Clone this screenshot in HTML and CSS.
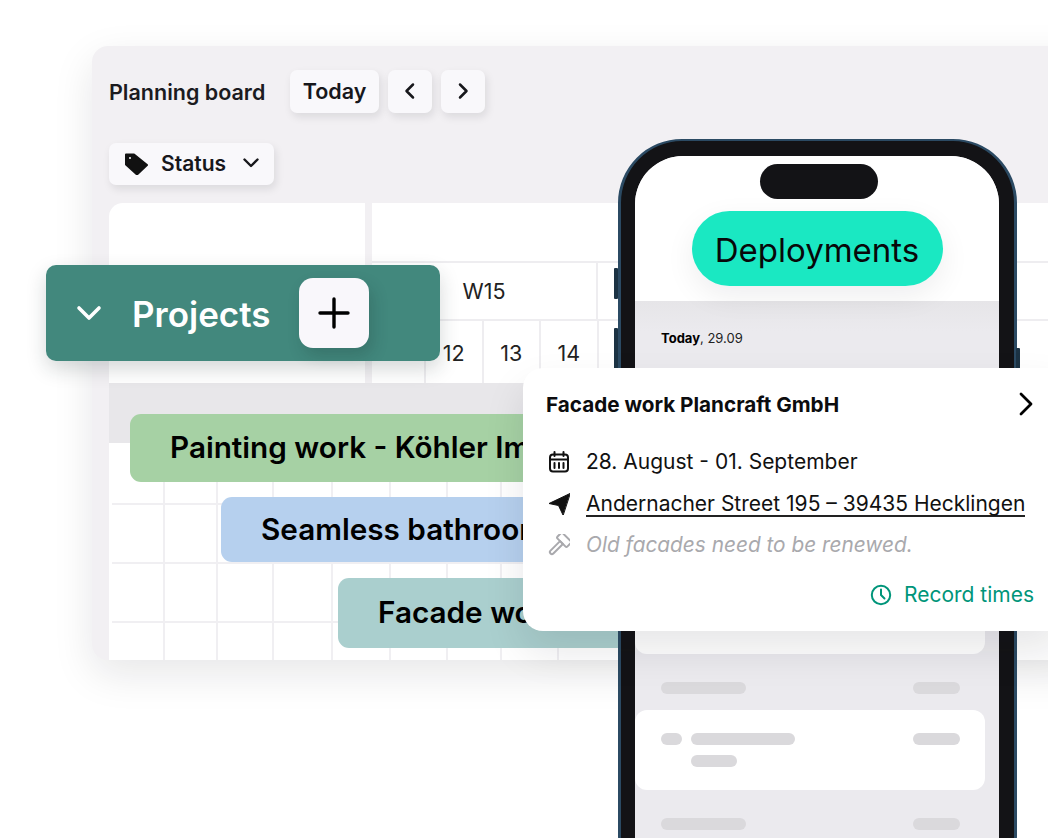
FILE: index.html
```html
<!DOCTYPE html>
<html lang="en">
<head>
    <meta charset="UTF-8">
    <meta name="viewport" content="width=device-width, initial-scale=1.0">
    <title>Planning board</title>
    <link rel="stylesheet" href="styles.css">
</head>
<body>
    <div class="stage">
        <!-- Planning board window -->
        <section class="board">
            <div class="board-top">
                <h2>Planning board</h2>
                <button class="btn btn-today">Today</button>
                <button class="btn btn-arrow">
                    <svg width="16" height="20" viewBox="0 0 16 20"><path d="M11 3.500 4.500 10l6.500 6.500" /></svg>
                </button>
                <button class="btn btn-arrow">
                    <svg width="16" height="20" viewBox="0 0 16 20"><path d="M5 3.500 11.500 10 5 16.500" /></svg>
                </button>
            </div>
            <div class="board-filter">
                <button class="btn btn-status">
                    <svg class="tag" width="24" height="24" viewBox="0 0 24 24">
                        <path d="M2 3.500h8L23 14 13 23.500 2 13.500z" />
                        <circle cx="6" cy="7" r="1" />
                    </svg>
                    <span>Status</span>
                    <svg class="down" width="18" height="12" viewBox="0 0 18 12"><path d="M2.500 2.500 9 9l6.500-6.500" /></svg>
                </button>
            </div>
            <div class="calendar-head">
                <div class="head-left"></div>
                <div class="head-right">
                    <div class="head-months"></div>
                    <div class="head-weeks">
                        <div class="week">W15</div>
                        <div class="week"></div>
                    </div>
                    <div class="head-days">
                        <div class="day first"></div>
                        <div class="day">12</div>
                        <div class="day">13</div>
                        <div class="day">14</div>
                        <div class="day"></div>
                        <div class="day"></div>
                        <div class="day"></div>
                        <div class="day"></div>
                        <div class="day"></div>
                    </div>
                </div>
            </div>
            <div class="gantt">
                <div class="gantt-lines">
                    <div></div><div></div><div></div><div></div><div></div><div></div><div></div><div></div>
                </div>
                <div class="gantt-band"></div>
                <div class="gantt-bars">
                    <div class="bar bar-green"><span>Painting work - Köhler Im</span></div>
                    <div class="bar bar-blue"><span>Seamless bathroom</span></div>
                    <div class="bar bar-teal"><span>Facade work</span></div>
                </div>
            </div>
        </section>

        <!-- Phone mockup -->
        <section class="phone">
            <span class="side side-a"></span>
            <span class="side side-b"></span>
            <span class="side side-c"></span>
            <div class="screen">
                <div class="island"></div>
                <div class="screen-top">
                    <div class="pill">Deployments</div>
                </div>
                <div class="screen-list">
                    <p class="list-date"><b>Today</b>, 29.09</p>
                    <div class="card card-first"></div>
                    <div class="skeleton-row">
                        <span class="sk sk-85"></span>
                        <span class="sk sk-47"></span>
                    </div>
                    <div class="card card-second">
                        <div class="card-line">
                            <span class="sk sk-21"></span>
                            <span class="sk sk-104"></span>
                            <span class="sk sk-47 push"></span>
                        </div>
                        <span class="sk sk-46"></span>
                    </div>
                    <div class="skeleton-row">
                        <span class="sk sk-85"></span>
                        <span class="sk sk-47"></span>
                    </div>
                </div>
            </div>
        </section>

        <!-- Projects header, lies over the board -->
        <div class="projects">
            <svg class="projects-arrow" width="26" height="16" viewBox="0 0 26 16"><path d="M3 3l10 10L23 3" /></svg>
            <span class="projects-label">Projects</span>
            <button class="projects-add">
                <svg width="32" height="32" viewBox="0 0 32 32"><path d="M16 2v28M2 16h28" /></svg>
            </button>
        </div>

        <!-- Detail popup -->
        <div class="popup">
            <div class="popup-title">
                <h3>Facade work Plancraft GmbH</h3>
                <svg width="18" height="24" viewBox="0 0 18 24"><path d="M4 2l10 10L4 22" /></svg>
            </div>
            <div class="popup-row row-date">
                <svg class="row-icon" width="22" height="22" viewBox="0 0 22 22">
                    <rect x="2" y="3.500" width="18" height="17" rx="3" />
                    <path d="M2 8.500h18M6.500 1v4M15.500 1v4M6.500 12v5M11 12v5M15.500 12v5" />
                </svg>
                <span>28. August - 01. September</span>
            </div>
            <div class="popup-row">
                <svg class="row-icon" width="22" height="22" viewBox="0 0 22 22">
                    <path class="solid" d="M22 0.500 1 10.500l9.500 2 4.500 9.500z" />
                </svg>
                <a href="#">Andernacher Street 195 – 39435 Hecklingen</a>
            </div>
            <div class="popup-row row-muted">
                <svg class="row-icon" width="22" height="22" viewBox="0 0 22 22">
                    <g transform="rotate(45 11 11)">
                        <rect x="4" y="0" width="14" height="7.500" rx="1.500" />
                        <path d="M9 7.500h4v13.500a2 2 0 0 1-4 0z" />
                    </g>
                </svg>
                <em>Old facades need to be renewed.</em>
            </div>
            <div class="popup-foot">
                <svg width="22" height="22" viewBox="0 0 22 22">
                    <circle cx="11" cy="11" r="9.200" />
                    <path d="M11 5.500V11l3.500 3.500" />
                </svg>
                <span>Record times</span>
            </div>
        </div>
    </div>
</body>
</html>
```

FILE: styles.css
```css
* {
    margin: 0;
    padding: 0;
    box-sizing: border-box;
}

body {
    font-family: 'Inter', 'Liberation Sans', sans-serif;
    background: #fff;
    color: #000;
    overflow: hidden;
}

svg path,
svg rect,
svg circle {
    fill: none;
    stroke: currentColor;
    stroke-linecap: round;
    stroke-linejoin: round;
}

.stage {
    position: relative;
    width: 1048px;
    height: 838px;
    overflow: hidden;
}

/* board */
.board {
    position: absolute;
    left: 92px;
    top: 46px;
    width: 1040px;
    height: 614px;
    padding: 24px 0 0 17px;
    background: #f2f0f3;
    border-radius: 16px 0 0 16px;
    box-shadow: 0 14px 40px rgba(20, 20, 30, 0.1);
}

.board-top {
    display: flex;
    align-items: center;
    height: 43px;
}

.board-top h2 {
    width: 181px;
    font-size: 21.500px;
    font-weight: 600;
    color: #1b1b1f;
}

.btn {
    display: flex;
    align-items: center;
    justify-content: center;
    height: 43px;
    padding-bottom: 2px;
    border: none;
    border-radius: 7px;
    background: #f9f8fb;
    color: #17171b;
    font-family: inherit;
    font-weight: 600;
    box-shadow: 2px 4px 8px rgba(20, 20, 30, 0.1);
}

.btn-today {
    width: 89px;
    margin-right: 9px;
    font-size: 21.500px;
}

.btn-arrow {
    width: 44px;
    margin-right: 9px;
}

.btn-arrow svg path {
    stroke-width: 2.500;
}

.board-filter {
    margin-top: 30px;
}

.btn-status {
    width: 165px;
    height: 42px;
    padding-left: 15px;
    justify-content: flex-start;
    font-size: 21px;
}

.tag {
    margin-right: 13px;
}

.tag path {
    fill: #111;
    stroke: #111;
    stroke-width: 2;
}

.tag circle {
    fill: #f9f8fb;
    stroke: none;
}

.down {
    margin-left: 16px;
}

.down path {
    stroke-width: 2.400;
}

/* calendar head */
.calendar-head {
    display: flex;
    gap: 7px;
    height: 180px;
    margin-top: 18px;
}

.head-left {
    width: 256px;
    background: #fff;
    border-radius: 14px 0 0 0;
}

.head-right {
    flex: 1;
    background: #fff;
}

.head-months {
    height: 60px;
    border-bottom: 2px solid #eeedf0;
}

.head-weeks {
    display: flex;
    height: 58px;
    border-bottom: 2px solid #eeedf0;
}

.week {
    flex: 0 0 226px;
    display: flex;
    align-items: center;
    justify-content: center;
    border-right: 2px solid #eeedf0;
    font-size: 21.500px;
    color: #222;
}

.head-days {
    display: flex;
    height: 62px;
}

.day {
    flex: 0 0 57.500px;
    display: flex;
    align-items: center;
    justify-content: center;
    padding-top: 2px;
    border-right: 2px solid #eeedf0;
    font-size: 21.500px;
    color: #222;
}

.day.first {
    flex-basis: 54px;
}

/* gantt */
.gantt {
    position: relative;
    height: 277px;
    background:
        linear-gradient(#f0eff2, #f0eff2) 3px 120px / 100% 2px no-repeat,
        linear-gradient(#f0eff2, #f0eff2) 3px 179px / 100% 2px no-repeat,
        linear-gradient(#f0eff2, #f0eff2) 3px 238px / 100% 2px no-repeat,
        #fff;
}

.gantt-lines {
    position: absolute;
    inset: 0;
    display: grid;
    grid-template-columns: 56px 53px 56px 59px 58px 57px 54px 57px;
}

.gantt-lines div {
    border-right: 2px solid #f0eff2;
}

.gantt-band {
    position: absolute;
    left: 0;
    right: 0;
    top: 0;
    height: 60px;
    background: #e8e7ea;
}

.gantt-bars {
    position: relative;
    padding-top: 31px;
}

.bar {
    display: flex;
    align-items: center;
    padding-left: 40px;
    padding-bottom: 2px;
    border-radius: 11px;
    font-size: 29.700px;
    font-weight: 600;
    white-space: nowrap;
}

/* bar labels stop where the popup starts */
.bar span {
    overflow: hidden;
}

.bar-green {
    height: 68px;
    margin-left: 21px;
    width: 800px;
    background: #a6d1a4;
}

.bar-green span {
    width: 353px;
}

.bar-blue {
    height: 65px;
    margin: 15px 0 0 112px;
    width: 700px;
    background: #b6d0ee;
}

.bar-blue span {
    width: 262px;
}

.bar-teal {
    height: 70px;
    margin: 16px 0 0 229px;
    width: 600px;
    background: #aacfce;
}

.bar-teal span {
    width: 150px;
}

/* phone */
.phone {
    position: absolute;
    left: 618px;
    top: 139px;
    width: 399px;
    height: 760px;
    padding: 17px 16px 16px;
    background: #131316;
    border: 3px solid #2b4a63;
    border-top-width: 2px;
    border-radius: 64px;
}

.side {
    position: absolute;
    width: 4px;
    background: #1c3344;
    border-radius: 1px;
}

.side-a {
    left: -7px;
    top: 127px;
    height: 31px;
}

.side-b {
    left: -7px;
    top: 187px;
    height: 60px;
}

.side-c {
    right: -6px;
    top: 207px;
    height: 60px;
}

.screen {
    position: relative;
    height: 100%;
    margin: -2px -1px -2px -2px;
    background: #ebeaee;
    border-radius: 48px 48px 0 0;
    overflow: hidden;
}

.island {
    position: absolute;
    left: 125px;
    top: 8px;
    width: 118px;
    height: 35px;
    background: #131316;
    border-radius: 18px;
}

.screen-top {
    display: flex;
    justify-content: center;
    height: 145px;
    padding-top: 55px;
    background: #fff;
}

.pill {
    display: flex;
    align-items: center;
    justify-content: center;
    width: 251px;
    height: 75px;
    padding-top: 3px;
    background: #1ae8c2;
    border-radius: 38px;
    font-size: 33px;
    color: #08080a;
    box-shadow: 0 10px 30px rgba(20, 20, 30, 0.07);
}

.screen-list {
    padding-top: 29px;
    background: linear-gradient(#e6e5e8, #ebeaee 30px);
}

.list-date {
    padding-left: 26px;
    font-size: 13px;
    line-height: 16px;
    color: #222;
}

.list-date b {
    font-weight: 700;
    color: #000;
}

.card {
    margin-right: 14px;
    background: #fff;
    border-radius: 12px;
}

.card-first {
    height: 274px;
    margin-top: 34px;
}

.card-second {
    height: 80px;
    padding: 23px 25px 0 26px;
}

.card-line {
    display: flex;
    gap: 9px;
    margin-bottom: 10px;
}

.skeleton-row {
    display: flex;
    justify-content: space-between;
    height: 56px;
    padding: 28px 25px 0 26px;
    margin-right: 14px;
}

.sk {
    display: block;
    height: 12px;
    background: #dad9dc;
    border-radius: 6px;
}

.sk-85 {
    width: 85px;
}

.sk-47 {
    width: 47px;
}

.sk-21 {
    width: 21px;
}

.sk-104 {
    width: 104px;
}

.sk-46 {
    width: 46px;
    margin-left: 30px;
}

.push {
    margin-left: auto;
}

/* projects */
.projects {
    position: absolute;
    left: 46px;
    top: 265px;
    display: flex;
    align-items: center;
    width: 394px;
    height: 96px;
    padding-left: 30px;
    background: #42887d;
    border-radius: 10px;
    color: #fff;
    box-shadow: 0 8px 20px rgba(20, 40, 40, 0.18);
}

.projects-arrow path {
    stroke-width: 3.600;
}

.projects-label {
    width: 167px;
    margin-left: 30px;
    padding-top: 2px;
    font-size: 35px;
    font-weight: 600;
}

.projects-add {
    display: flex;
    align-items: center;
    justify-content: center;
    width: 70px;
    height: 70px;
    border: none;
    border-radius: 14px;
    background: #f9f7fb;
    color: #000;
    box-shadow: 4px 8px 16px rgba(20, 40, 40, 0.2);
}

.projects-add path {
    stroke-width: 3.400;
}

/* popup */
.popup {
    position: absolute;
    left: 523px;
    top: 368px;
    width: 540px;
    height: 263px;
    padding: 23px 29px 0 23px;
    background: #fff;
    border-radius: 20px 0 0 20px;
    box-shadow: 0 20px 40px rgba(20, 20, 30, 0.1);
}

.popup-title {
    display: flex;
    align-items: center;
    justify-content: space-between;
    width: 489px;
    height: 26px;
    margin-bottom: 24px;
}

.popup-title h3 {
    font-size: 20.700px;
    font-weight: 700;
    color: #0c0c0e;
}

.popup-title path {
    stroke-width: 2.800;
}

.popup-row {
    display: flex;
    align-items: center;
    height: 41px;
    font-size: 21px;
    color: #111;
}

.row-date {
    margin-bottom: 1px;
}

.row-icon {
    flex: none;
    width: 22px;
    margin-right: 16px;
    margin-left: 2px;
}

.row-icon path,
.row-icon rect {
    stroke-width: 2;
}

.row-icon .solid {
    fill: currentColor;
    stroke-width: 1;
}

.popup-row a {
    color: #111;
    text-decoration: none;
    border-bottom: 2px solid #222;
    line-height: 22px;
    margin-top: 2px;
}

.row-muted {
    color: #a9a9ad;
    font-size: 20.800px;
}

.popup-foot {
    display: flex;
    align-items: center;
    justify-content: flex-end;
    gap: 12px;
    width: 488px;
    margin-top: 17px;
    font-size: 21px;
    color: #00957a;
}

.popup-foot svg * {
    stroke-width: 2;
}
```
